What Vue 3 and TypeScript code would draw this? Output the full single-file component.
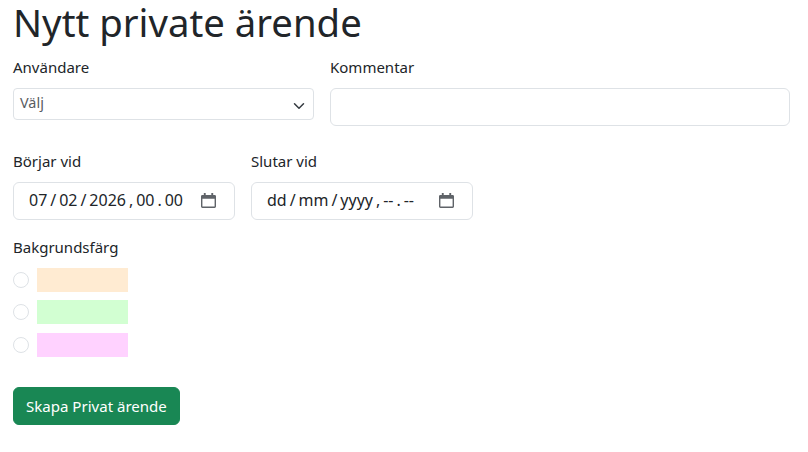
<script setup lang="ts">
interface Swatch {
  id: string
  color: string
}

const swatches: Swatch[] = [
  { id: 'orange', color: '#ffebd2' },
  { id: 'green', color: '#d2ffd2' },
  { id: 'pink', color: '#ffd2ff' },
]
</script>

<template>
  <main class="page">
    <h1 class="title">Nytt private ärende</h1>

    <div class="row top-row">
      <div class="field user-field">
        <label class="label">Användare</label>
        <div class="select">
          <span>Välj</span>
          <svg class="chevron" viewBox="0 0 16 16" width="16" height="12" fill="none" stroke="#343a40" stroke-width="2" stroke-linecap="round" stroke-linejoin="round">
            <path d="m2 5 6 6 6-6" />
          </svg>
        </div>
      </div>
      <div class="field comment-field">
        <label class="label">Kommentar</label>
        <div class="input"></div>
      </div>
    </div>

    <div class="row date-row">
      <div class="field date-field">
        <label class="label">Börjar vid</label>
        <div class="input date">
          <span class="date-text">07 / 02 / 2026 , 00 . 00</span>
          <svg class="calendar" viewBox="0 0 16 16" width="15" height="15" fill="#5f6368">
            <path d="M3 0h2v2h6V0h2v2h1.500A1.500 1.500 0 0 1 16 3.500v11a1.500 1.500 0 0 1-1.500 1.500h-13A1.500 1.500 0 0 1 0 14.500v-11A1.500 1.500 0 0 1 1.500 2H3V0ZM1.500 6v8.500h13V6h-13Z" />
          </svg>
        </div>
      </div>
      <div class="field date-field">
        <label class="label">Slutar vid</label>
        <div class="input date">
          <span class="date-text">dd / mm / yyyy , -- . --</span>
          <svg class="calendar" viewBox="0 0 16 16" width="15" height="15" fill="#5f6368">
            <path d="M3 0h2v2h6V0h2v2h1.500A1.500 1.500 0 0 1 16 3.500v11a1.500 1.500 0 0 1-1.500 1.500h-13A1.500 1.500 0 0 1 0 14.500v-11A1.500 1.500 0 0 1 1.500 2H3V0ZM1.500 6v8.500h13V6h-13Z" />
          </svg>
        </div>
      </div>
    </div>

    <div class="colors">
      <label class="label">Bakgrundsfärg</label>
      <div v-for="s in swatches" :key="s.id" class="color-row">
        <span class="radio"></span>
        <span class="swatch" :style="{ backgroundColor: s.color }"></span>
      </div>
    </div>

    <button class="submit" type="button">Skapa Privat ärende</button>
  </main>
</template>

<style scoped>
.page {
  padding: 0 13px;
  color: #212529;
  font-family: "Noto Sans", sans-serif;
  font-size: 15px;
}

.title {
  margin: 0 0 12px;
  font-size: 38.3px;
  font-weight: 400;
  line-height: 44px;
}

.row {
  display: flex;
  gap: 16px;
}

.top-row {
  height: 94px;
}

.user-field {
  width: 301px;
}

.comment-field {
  width: 460px;
}

.date-field {
  width: 222px;
}

.label {
  display: block;
  margin-bottom: 10px;
  line-height: 22px;
}

.select {
  display: flex;
  align-items: center;
  justify-content: space-between;
  box-sizing: border-box;
  height: 32px;
  padding: 0 6px 3px;
  border: 1px solid #dee2e6;
  border-radius: 4px;
  color: #595c5f;
  font-size: 14.4px;
}

.chevron {
  margin-top: 6px;
}

.input {
  box-sizing: border-box;
  height: 38px;
  border: 1px solid #dee2e6;
  border-radius: 6px;
}

.date {
  display: flex;
  align-items: center;
  justify-content: space-between;
  padding: 0 18px 0 15px;
}

.date-text {
  padding-bottom: 2px;
  font-size: 16px;
  white-space: nowrap;
  word-spacing: -1.2px;
}

.calendar {
  margin-bottom: 2px;
}

.date-row {
  margin-bottom: 16px;
}

.colors {
  margin-bottom: 30px;
}

.color-row {
  display: flex;
  align-items: center;
  gap: 8px;
  height: 24px;
  margin-bottom: 8.4px;
}

.radio {
  box-sizing: border-box;
  width: 16px;
  height: 16px;
  border: 1px solid #dee2e6;
  border-radius: 50%;
}

.swatch {
  width: 91px;
  height: 24px;
}

.submit {
  display: block;
  height: 38px;
  padding: 0 12px;
  border: 1px solid #198754;
  border-radius: 6px;
  background: #198754;
  color: #fff;
  font: inherit;
  font-size: 15.05px;
}
</style>

<style>
body {
  background: #fff;
}
</style>
